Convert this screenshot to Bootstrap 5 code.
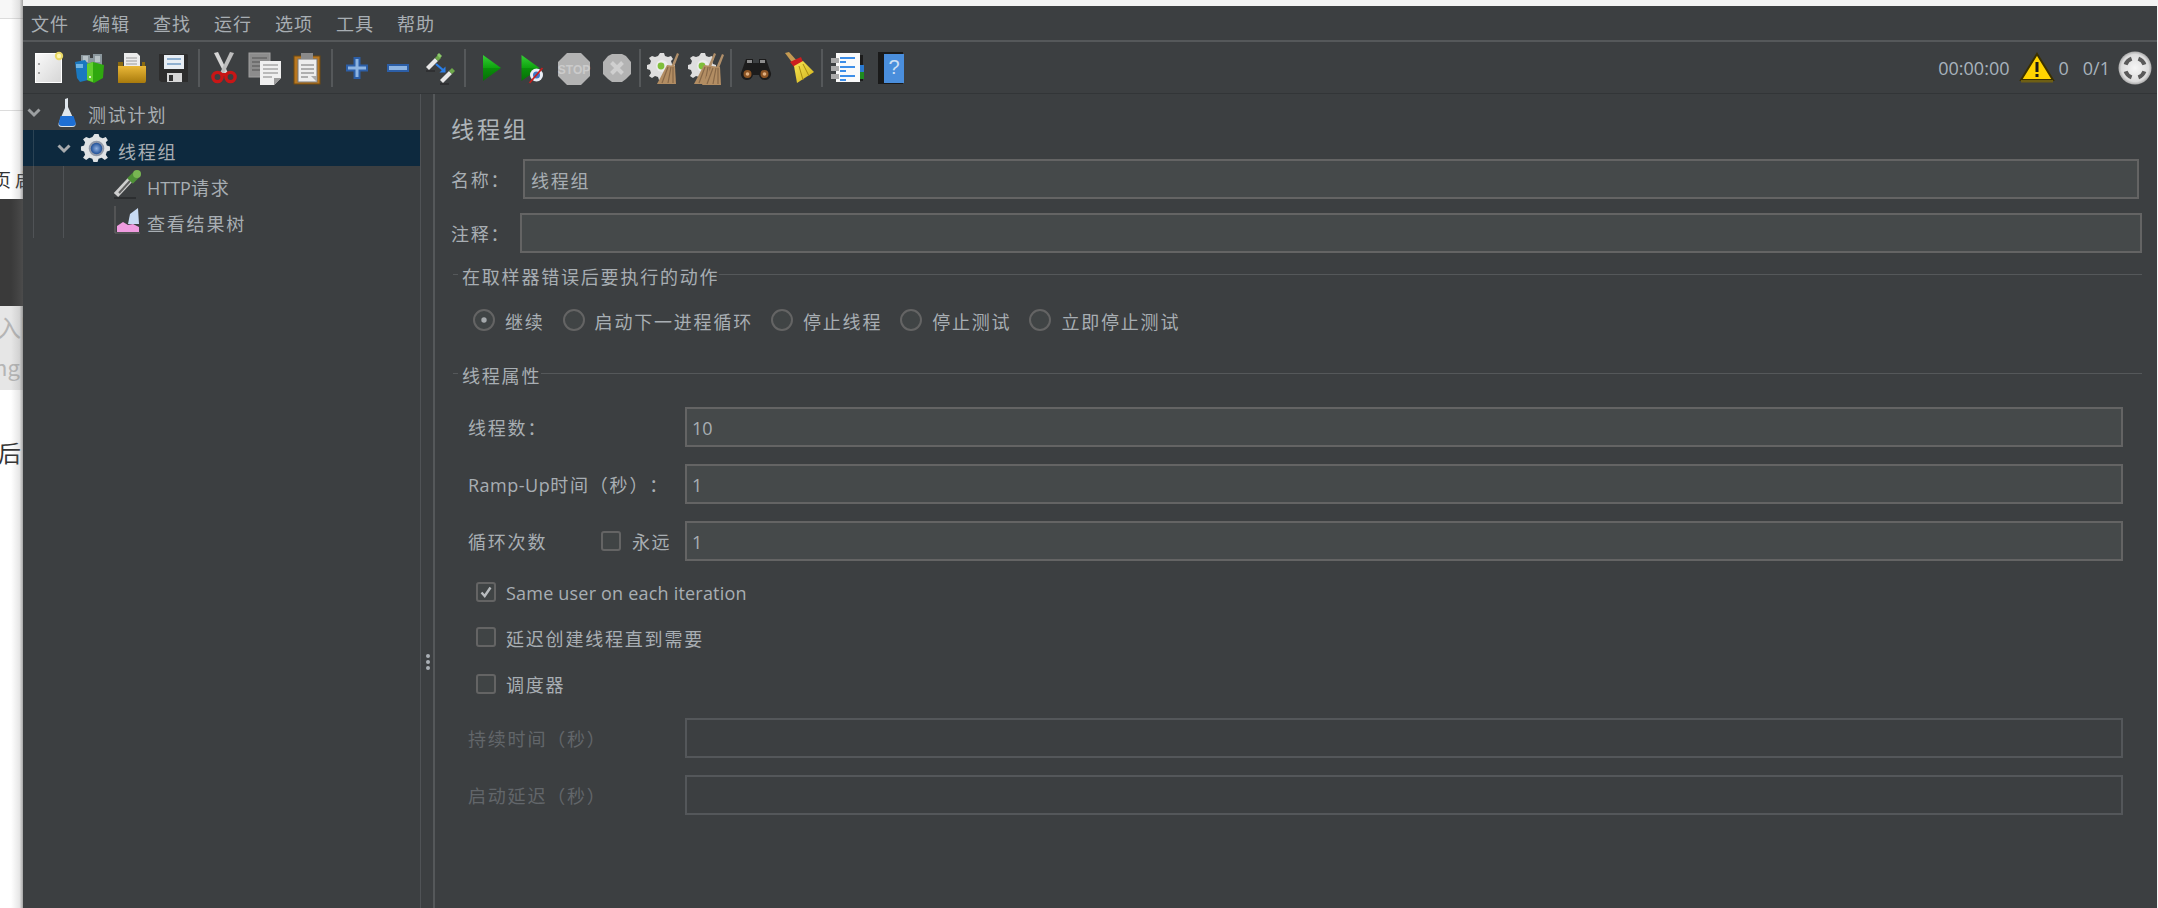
<!DOCTYPE html>
<html lang="zh">
<head>
<meta charset="utf-8">
<title>线程组</title>
<link rel="stylesheet" href="https://cdn.jsdelivr.net/npm/bootstrap@5.3.0/dist/css/bootstrap.min.css">
<style>
html,body{height:908px;overflow:hidden;margin:0}
body{background:#fff;font-family:"Open Sans","Noto Sans CJK SC",sans-serif;font-size:18px;color:#a8aeb3;line-height:24px;text-spacing-trim:space-all}
.shell{height:908px;width:2158px}
.behind{width:23px;height:908px;overflow:hidden;position:relative;flex:none;font-family:"Noto Sans CJK SC",sans-serif}
.behind::after{content:"";position:absolute;top:0;bottom:0;right:0;width:12px;background:linear-gradient(90deg,rgba(120,120,120,0),rgba(120,120,120,.18) 70%,rgba(90,90,90,.55))}
.b1{height:19px;background:#f7f7f7;border-bottom:1px solid #dcdcdc}
.b2{height:92px;border-bottom:1px solid #dcdcdc}
.b3{height:88px;color:#333;white-space:nowrap;padding-top:56px;font-size:18px;margin-left:-7px}
.b4{height:107px;background:#3a3a3a}
.b5{height:84px;background:#e6e6e6;color:#b5b5b5;white-space:nowrap}
.b5a{font-size:24px;line-height:30px;padding-top:6px;margin-left:-3px}
.b5b{font-size:22px;line-height:30px;margin-left:-12px;padding-top:9px}
.b6{color:#333;font-size:23px;padding-top:47px;margin-left:-2px;line-height:30px}
.topedge{height:6px;background:#f3f3f3}
.win{width:2134px;flex:none}
.edge{width:1px;flex:none;background:#f3f3f3}
.frame{height:902px;background:#3c3f41;overflow:hidden}
.menubar{height:36px;border-bottom:2px solid #55585a;padding-left:8px;padding-top:2px;gap:23.5px;letter-spacing:1px}
.menubar span{width:37.5px;white-space:nowrap}
.toolbar{height:52px;border-bottom:1px solid #323537;padding-left:5px}
.tool{width:41.7px;height:32px;padding:0;border:0;background:none;display:flex;justify-content:center;flex:none}
.tsep{width:8px;height:38px;flex:none;display:flex;justify-content:center}
.tsep i{width:2px;background:#55585a}
svg{display:block;overflow:visible;flex:none}
.status{font-size:18px;color:#a8b3bd;padding-right:5px;white-space:nowrap}
.warn{margin-left:11px}
.wn{margin-left:4px}
.mainrow{height:814px}
.treepane{width:397px;flex:none}
.trow{height:36px;white-space:nowrap;letter-spacing:1.8px}
.trow>span{padding-top:6px}
.g1 .trow>span{padding-top:8px}
.lat{letter-spacing:0}
.tsel{background-color:#0d293e;background-image:linear-gradient(#2b4354,#2b4354);background-size:1px 100%;background-position:10px 0;background-repeat:no-repeat;margin-left:-11px;padding-left:34px}
.g1{margin-left:10px;border-left:1px solid #505356;width:387px}
.g2{margin-left:29px;border-left:1px solid #505356}
.r0{padding-left:4px}
.chev{width:14px}
.i0{margin-left:16px;margin-right:11px}
.i1{margin-left:11px;margin-right:7px}
.i2{margin-left:48px;margin-right:5px}
.splitter{width:15px;flex:none;border-left:1px solid #505356;border-right:2px solid #55585a;padding-top:560px;gap:2px}
.splitter i{width:4px;height:4px;border-radius:50%;background:#aab0b5;margin-left:5px}
.panel{width:1723px;flex:none;padding-left:16px}
.ptitle{font-size:23px;letter-spacing:3px;line-height:30px;margin-top:20px;margin-bottom:15px;color:#aeb4b9}
.field.form-control{height:40px;border-radius:0;border:2px solid #646464;background:#45494a;color:#a8aeb3;font-size:18px;line-height:24px;padding:2px 6px 0;box-shadow:none;font-family:inherit;letter-spacing:1.8px}
.field.form-control.num{letter-spacing:0;padding-left:5px}
.field.form-control:disabled{background:transparent;border-color:#54575a;opacity:1}
.namerow{width:1688px}
.cmtrow{width:1691px;margin-top:14px}
.nl{width:72px;flex:none;letter-spacing:1.8px;white-space:nowrap;padding-top:2px}
.cl{width:69px;flex:none;letter-spacing:1.8px;white-space:nowrap;padding-top:2px}
.legendrow{height:24px;margin-left:2px;width:1689px;letter-spacing:1.8px;white-space:nowrap}
.legendrow span{padding-top:2px}
.legendrow i{height:1px;background:#55585a;margin-top:-4px}
.legendrow i.d0{width:5px;margin-right:4px;flex:none}
.lg1{margin-top:11px}
.lg2{margin-top:31px}
.radios{height:24px;margin-top:20px;margin-left:22px;letter-spacing:1.8px;white-space:nowrap}
.radios span{padding-top:3px}
.form-check-input.jr{width:22px;height:22px;margin:0 10px 0 0;background-color:#404445;border:2px solid #646464;flex:none;box-shadow:none}
.form-check-input.jr:checked{background-color:#404445;border-color:#646464;background-image:url("data:image/svg+xml,%3csvg xmlns='http://www.w3.org/2000/svg' viewBox='0 0 20 20'%3e%3ccircle cx='10' cy='10' r='3' fill='%23a5a9ac'/%3e%3c/svg%3e");background-size:100%}
.rl{margin-right:18px}
.props{margin-left:17px;width:1655px}
.prow{height:40px;margin-top:17px}
.p0{margin-top:20px}
.plabel{width:217px;flex:none;letter-spacing:1.8px;white-space:nowrap;padding-top:2px}
.plabel.off{color:#62666a}
.rampl{letter-spacing:.5px}
.form-check-input.jc{width:20px;height:20px;margin:0;background-color:#404445;border:2px solid #646464;border-radius:3px;flex:none;box-shadow:none}
.form-check-input.jc:checked{background-color:#404445;border-color:#646464;background-image:url("data:image/svg+xml,%3csvg xmlns='http://www.w3.org/2000/svg' viewBox='0 0 16 16'%3e%3cpath d='M3.5 8.5 6.7 12 12.5 3.5' fill='none' stroke='%23b8bcbf' stroke-width='2.4'/%3e%3c/svg%3e");background-size:100%}
.loop{width:133px;flex:none;letter-spacing:1.8px;white-space:nowrap;padding-top:2px}
.forever{width:84px;flex:none;letter-spacing:1.5px}
.forever span{padding-top:2px}
.forever .jc{margin-right:11px}
.crow{height:24px;margin-left:8px;white-space:nowrap;letter-spacing:1.8px}
.crow span{padding-top:2px}
.crow .sameu{letter-spacing:.2px}
.crow .late{padding-top:4px}
.crow .jc{margin-right:10px}
.c0{margin-top:19px}
.c1{margin-top:21px}
.c2{margin-top:23px}
.p3{margin-top:22px}
.defs{width:0;height:0;position:absolute}
</style>
</head>
<body>
<svg class="defs" aria-hidden="true"><defs>
<linearGradient id="gPage" x1="0" y1="0" x2="1" y2="1"><stop offset="0" stop-color="#fafafa"/><stop offset="1" stop-color="#d6d6d6"/></linearGradient>
<linearGradient id="gGold" x1="0" y1="0" x2="0" y2="1"><stop offset="0" stop-color="#eab838"/><stop offset="1" stop-color="#a87a0c"/></linearGradient>
<linearGradient id="gGreen" x1="0" y1="0" x2="0" y2="1"><stop offset="0" stop-color="#35cf35"/><stop offset=".5" stop-color="#0ea30e"/><stop offset=".51" stop-color="#0a8f0a"/><stop offset="1" stop-color="#076f07"/></linearGradient>
<linearGradient id="gBroom" x1="0" y1="0" x2="1" y2="1"><stop offset="0" stop-color="#f7e653"/><stop offset="1" stop-color="#d0b01a"/></linearGradient>
<radialGradient id="gBall" cx=".5" cy=".5" r=".55"><stop offset="0" stop-color="#f6f6f6"/><stop offset=".75" stop-color="#dcdcdc"/><stop offset="1" stop-color="#8f8f8f"/></radialGradient>
<radialGradient id="gCore" cx=".5" cy=".5" r=".5"><stop offset="0" stop-color="#8fb0e0"/><stop offset="1" stop-color="#1f4f96"/></radialGradient>
<g id="gearBrush">
<path d="M12 1h4l1 3 3 1 3-1 2 3-2 2 1 3 3 1v4l-3 1-1 3 2 3-3 2-3-2-3 1-1 3h-4l-1-3-3-1-3 2-3-2 2-3-1-3-3-1v-4l3-1 1-3-2-3 3-2 3 1 3-1z" fill="#dedede"/>
<circle cx="14" cy="14" r="6" fill="#ececec"/><circle cx="13" cy="14" r="3.4" fill="#7fbf3a"/>
</g>
<g id="brush">
<path d="M29 1l2 1-5 13h-3z" fill="#b08f6a"/>
<path d="M19 13l8 1 1 18H9z" fill="#b28d63"/>
<path d="M20 15l-6 16M23 15l-3 16M25 15l0 16" stroke="#876848" stroke-width="1.2"/>
</g>
</defs></svg>

<div class="shell d-flex">
  <div class="behind">
    <div class="b1"></div><div class="b2"></div>
    <div class="b3">页&nbsp;启</div>
    <div class="b4"></div>
    <div class="b5"><div class="b5a">入图</div><div class="b5b">ing</div></div>
    <div class="b6">后</div>
  </div>
  <div class="win">
    <div class="topedge"></div>
    <div class="frame d-flex flex-column">
      <div class="menubar d-flex align-items-center">
        <span>文件</span><span>编辑</span><span>查找</span><span>运行</span><span>选项</span><span>工具</span><span>帮助</span>
      </div>
      <div class="toolbar d-flex align-items-center">
        <button class="tool" type="button" aria-label="新建"><svg width="32" height="32" viewBox="0 0 32 32"><rect x="2.5" y="1.5" width="26" height="29" fill="url(#gPage)" stroke="#fff"/><circle cx="26" cy="4" r="4.2" fill="#e9d866"/><circle cx="26" cy="4" r="2.2" fill="#fff6b0"/><circle cx="6" cy="12" r="1" fill="#888"/><circle cx="6" cy="21" r="1" fill="#888"/></svg></button>
        <button class="tool" type="button" aria-label="模板"><svg width="32" height="32" viewBox="0 0 32 32"><path d="M6 3h9v3h3V2h9v12H6z" fill="#8b979d"/><path d="M8 4h5v6H8zM20 4h5v6h-5z" fill="#b8c2c6"/><path d="M0 10l10-2 3 4v16l-8 2-3-4z" fill="#1a78bf"/><path d="M1 12h7v4H1z" fill="#6fb4e3"/><path d="M12 12l6-2 11 3-1 13-9 5-7-3z" fill="#2fa80f"/><path d="M12 12l6-2v20l-6-2z" fill="#63cf2f"/><circle cx="15" cy="25" r="1" fill="#fff"/></svg></button>
        <button class="tool" type="button" aria-label="打开"><svg width="32" height="32" viewBox="0 0 32 32"><path d="M8 1h13l3 3v14H8z" fill="#ececec"/><path d="M10 6h11M10 9h11M10 12h11" stroke="#9a9a9a"/><path d="M2 10h5v5h19v-5h3v21H2z" fill="#8a6a10"/><path d="M2 14h28v15a2 2 0 0 1-2 2H3a1 1 0 0 1-1-1z" fill="url(#gGold)"/></svg></button>
        <button class="tool" type="button" aria-label="保存"><svg width="32" height="32" viewBox="0 0 32 32"><path d="M1 2h28l1 1v27H3l-2-2z" fill="#2d2d2d"/><rect x="6" y="3" width="20" height="14" fill="#e8eef4"/><path d="M9 6h14v2H9zM9 11h14v2H9z" fill="#8fb0d0"/><rect x="9" y="21" width="15" height="9" fill="#d8d8d8"/><rect x="11" y="23" width="4" height="6" fill="#333"/></svg></button>
        <div class="tsep"><i></i></div>
        <button class="tool" type="button" aria-label="剪切"><svg width="32" height="32" viewBox="0 0 32 32"><path d="M6 1l4-1 10 21-3 2z" fill="#d5d5d5"/><path d="M26 1l-4-1-10 21 3 2z" fill="#bdbdbd"/><circle cx="9.5" cy="25" r="4.6" fill="none" stroke="#c81616" stroke-width="3.4"/><circle cx="22.5" cy="25" r="4.6" fill="none" stroke="#c81616" stroke-width="3.4"/><path d="M13 21h6v3h-6z" fill="#c81616"/></svg></button>
        <button class="tool" type="button" aria-label="复制"><svg width="32" height="32" viewBox="0 0 32 32"><rect x="0" y="1" width="21" height="24" fill="#8c8c8c" stroke="#a0a0a0"/><path d="M3 6h15M3 10h8M3 14h8M3 18h8" stroke="#666" stroke-width="1.5"/><path d="M11 9h21v17l-7 7H11z" fill="#efefef"/><path d="M14 13h15M14 17h15M14 21h15M14 25h9" stroke="#a8a8a8" stroke-width="1.5"/><path d="M25 33v-7h7z" fill="#9b9b9b"/></svg></button>
        <button class="tool" type="button" aria-label="粘贴"><svg width="32" height="32" viewBox="0 0 32 32"><rect x="3" y="4" width="26" height="28" fill="#b9771f" stroke="#6e4a12"/><rect x="7" y="7" width="19" height="23" fill="#ededed" stroke="#777"/><path d="M10 13h13M10 17h13M10 21h13M10 25h7" stroke="#9a9a9a" stroke-width="1.4"/><rect x="10" y="1" width="12" height="6" fill="#8a8a8a"/><path d="M26 30v-6h-6z" fill="#aaa"/></svg></button>
        <div class="tsep"><i></i></div>
        <button class="tool" type="button" aria-label="展开"><svg width="32" height="32" viewBox="0 0 32 32"><path d="M13.5 6h5v7.500h7.500v5h-7.500V26h-5v-7.500H6v-5h7.500z" fill="#8db4e2" stroke="#2c5ea6" stroke-width="2"/></svg></button>
        <button class="tool" type="button" aria-label="折叠"><svg width="32" height="32" viewBox="0 0 32 32"><rect x="6" y="13" width="20" height="6" fill="#8db4e2" stroke="#2c5ea6" stroke-width="2"/></svg></button>
        <button class="tool" type="button" aria-label="切换"><svg width="32" height="32" viewBox="0 0 32 32"><path d="M2 15L11 6l3 3-9 9z" fill="#e8e8e8"/><path d="M11 6l3-3 3 3-3 3z" fill="#6da84a"/><path d="M15 1l3 3-2 2-3-3z" fill="#8cc96a"/><path d="M16 28l9-9 3 3-9 9z" fill="#e8e8e8"/><path d="M25 19l3-3 3 3-3 3z" fill="#6da84a"/><path d="M12 12l7 6" stroke="#2a7ee8" stroke-width="2.200"/><path d="M15.500 20.500h6v-6z" fill="#2a7ee8"/><path d="M2 19h9M16 32h9" stroke="#2b2d2e" stroke-width="1.500"/></svg></button>
        <div class="tsep"><i></i></div>
        <button class="tool" type="button" aria-label="启动"><svg width="32" height="32" viewBox="0 0 32 32"><path d="M9 3l18 13L9 29z" fill="url(#gGreen)"/></svg></button>
        <button class="tool" type="button" aria-label="不停顿启动"><svg width="32" height="32" viewBox="0 0 32 32"><path d="M6.500 3l18 13-18 13z" fill="url(#gGreen)"/><circle cx="21.500" cy="23" r="6.500" fill="#e9eef6"/><circle cx="21.500" cy="23" r="3.500" fill="#3c78c8"/><path d="M14.500 31l13-15" stroke="#c41e1e" stroke-width="1.800"/></svg></button>
        <button class="tool" type="button" aria-label="停止"><svg width="34" height="34" viewBox="0 0 34 34"><g transform="translate(1 0)"><path d="M10 1h14l9 9v14l-9 9H10l-9-9V10z" fill="#b3b3b3"/><text x="17" y="21.500" text-anchor="middle" font-family="Liberation Sans" font-size="12" font-weight="700" fill="#cbcbcb">STOP</text></g></svg></button>
        <button class="tool" type="button" aria-label="关闭"><svg width="32" height="32" viewBox="0 0 32 32"><g transform="translate(2 0)"><path d="M11 2h10l4 2 5 6v12l-5 5-4 3H11l-4-3-5-5V10l5-6z" fill="#b3b3b3"/><path d="M10.500 10.500l11 11M21.500 10.500l-11 11" stroke="#cfcfcf" stroke-width="4"/></g></svg></button>
        <div class="tsep"><i></i></div>
        <button class="tool" type="button" aria-label="清除"><svg width="32" height="32" viewBox="0 0 32 32"><use href="#gearBrush"/><use href="#brush"/></svg></button>
        <button class="tool" type="button" aria-label="清除全部"><svg width="34" height="32" viewBox="0 0 34 32"><use href="#gearBrush"/><use href="#brush" transform="translate(-4 0)"/><use href="#brush" transform="translate(4 1)"/></svg></button>
        <div class="tsep"><i></i></div>
        <button class="tool" type="button" aria-label="搜索"><svg width="32" height="32" viewBox="0 0 32 32"><path d="M6 7h7v4h6V7h7l5 14a6 6 0 0 1-12 2h-6a6 6 0 0 1-12-2z" fill="#1c1c1c"/><path d="M7 8h5v3H7zM20 8h5v3h-5z" fill="#8d8d8d"/><circle cx="7.500" cy="22" r="4" fill="#8c5424"/><circle cx="24.500" cy="22" r="4" fill="#8c5424"/><circle cx="7.500" cy="22" r="1.800" fill="#e0b080"/><circle cx="24.500" cy="22" r="1.800" fill="#e0b080"/></svg></button>
        <button class="tool" type="button" aria-label="重置"><svg width="32" height="32" viewBox="0 0 32 32"><path d="M3 1l4-1 9 10-4 3z" fill="#c49a52"/><path d="M8 10l11-5 2 5-9 5z" fill="#cc1f1f"/><path d="M12 14l9-5 11 11-17 11z" fill="url(#gBroom)"/><path d="M17 14l4 14M21 12l6 12" stroke="#a98c10"/></svg></button>
        <div class="tsep"><i></i></div>
        <button class="tool" type="button" aria-label="函数助手"><svg width="33" height="32" viewBox="0 0 33 32"><rect x="26" y="3" width="6" height="26" fill="#1c1c1c"/><rect x="28" y="13" width="5" height="7" fill="#2a79d0"/><rect x="28" y="20" width="5" height="7" fill="#1f8a1f"/><rect x="5" y="1" width="24" height="29" fill="#fafafa"/><path d="M9 6h15M9 15h15M9 24h15" stroke="#3d8ee8" stroke-width="2"/><path d="M9 10h6M9 19h6M9 28h6" stroke="#3d8ee8" stroke-width="2"/><path d="M0 6h8v5H0zM0 14h8v5H0zM0 22h8v5H0z" fill="#aaa"/></svg></button>
        <button class="tool" type="button" aria-label="帮助"><svg width="28" height="32" viewBox="0 0 28 32"><g transform="translate(2 0)"><rect x="1" y="0" width="25" height="32" fill="#1a1a1a"/><rect x="7" y="2" width="20" height="29" fill="#4a8edc"/><text x="17" y="22" text-anchor="middle" font-family="Liberation Sans" font-size="20" fill="#cfe0f4">?</text></g></svg></button>
        <div class="status ms-auto d-flex align-items-center">
          <span>00:00:00</span>
          <svg class="warn" width="34" height="30" viewBox="0 0 34 30"><path d="M17 1L33 27H1z" fill="#ffd400" stroke="#3a3000" stroke-width="2"/><rect x="1" y="27" width="32" height="2.500" fill="#6e5f14"/><path d="M15.500 9h3v10h-3zM15.500 21h3v3h-3z" fill="#1a1a1a"/></svg>
          <span class="wn">0</span><span>&nbsp;&nbsp;&nbsp;0/1</span>
          <svg class="ms-2" width="34" height="34" viewBox="0 0 34 34"><circle cx="17" cy="17" r="16.500" fill="url(#gBall)"/><circle cx="17" cy="17" r="10" fill="none" stroke="#5a5a5a" stroke-width="4" pathLength="360" stroke-dasharray="50 40" stroke-dashoffset="-20"/></svg>
        </div>
      </div>
      <div class="mainrow d-flex">
        <div class="treepane">
          <div class="trow r0 d-flex align-items-center">
            <svg class="chev" width="14" height="9" viewBox="0 0 14 9"><path d="M1.500 1.500L7 7l5.500-5.500" fill="none" stroke="#9c9fa1" stroke-width="3"/></svg>
            <svg class="i0" width="20" height="29" viewBox="0 0 20 29"><path d="M8 1l3-1v9l7 15q2 5-3 5H5q-5 0-3-5l6-14z" fill="#dfe6ec"/><path d="M3.500 18h13l2 6q1 4-3 4H5q-4 0-3-4z" fill="#1e6fd4"/></svg>
            <span>测试计划</span>
          </div>
          <div class="g1">
            <div class="trow tsel d-flex align-items-center">
              <svg class="chev" width="14" height="9" viewBox="0 0 14 9"><path d="M1.500 1.500L7 7l5.500-5.500" fill="none" stroke="#a8abae" stroke-width="3"/></svg>
              <svg class="i1" width="29" height="29" viewBox="0 0 28 28"><path d="M12 0h4l1 3 3 1 3-1 2 3-2 2 1 3 3 1v4l-3 1-1 3 2 3-3 2-3-2-3 1-1 3h-4l-1-3-3-1-3 2-3-2 2-3-1-3-3-1v-4l3-1 1-3-2-3 3-2 3 1 3-1z" fill="#dfe2e4"/><circle cx="14" cy="14" r="7.500" fill="#8f98a8"/><circle cx="14" cy="14" r="5.500" fill="url(#gCore)"/></svg>
              <span>线程组</span>
            </div>
            <div class="g2">
              <div class="trow d-flex align-items-center">
                <svg class="i2" width="30" height="30" viewBox="0 0 30 30"><path d="M4 26L18 11" stroke="#cfcfcf" stroke-width="6"/><path d="M7 24L18 12" stroke="#5f5f5f" stroke-width="2"/><path d="M18 12l6-6" stroke="#4e8f36" stroke-width="8"/><circle cx="25" cy="5" r="4" fill="#78b552"/><path d="M2 29h22" stroke="#2c2e30" stroke-width="2"/></svg>
                <span><span class="lat">HTTP</span>请求</span>
              </div>
              <div class="trow d-flex align-items-center">
                <svg class="i2" width="30" height="30" viewBox="0 0 30 30"><path d="M3 1v27h25" fill="none" stroke="#6a6a6a"/><path d="M5 27v-6l6-4 5 3 5-1 6 3v5z" fill="#ef9ce0"/><path d="M16 19l2-10 8-6 1 16z" fill="#c8dbf4"/></svg>
                <span>查看结果树</span>
              </div>
            </div>
          </div>
        </div>
        <div class="splitter d-flex flex-column"><i></i><i></i><i></i></div>
        <div class="panel">
          <div class="ptitle">线程组</div>
          <div class="namerow d-flex align-items-center"><span class="nl">名称：</span><input class="field form-control" value="线程组" aria-label="名称"></div>
          <div class="cmtrow d-flex align-items-center"><span class="cl">注释：</span><input class="field form-control" aria-label="注释"></div>
          <div class="legendrow lg1 d-flex align-items-center"><i class="d0"></i><span>在取样器错误后要执行的动作</span><i class="flex-fill"></i></div>
          <div class="radios d-flex align-items-center">
            <input class="form-check-input jr" type="radio" name="act" checked aria-label="继续"><span class="rl">继续</span>
            <input class="form-check-input jr" type="radio" name="act" aria-label="启动下一进程循环"><span class="rl">启动下一进程循环</span>
            <input class="form-check-input jr" type="radio" name="act" aria-label="停止线程"><span class="rl">停止线程</span>
            <input class="form-check-input jr" type="radio" name="act" aria-label="停止测试"><span class="rl">停止测试</span>
            <input class="form-check-input jr" type="radio" name="act" aria-label="立即停止测试"><span class="rl">立即停止测试</span>
          </div>
          <div class="legendrow lg2 d-flex align-items-center"><i class="d0"></i><span>线程属性</span><i class="flex-fill"></i></div>
          <div class="props">
            <div class="prow p0 d-flex align-items-center"><span class="plabel">线程数：</span><input class="field form-control num" value="10" aria-label="线程数"></div>
            <div class="prow d-flex align-items-center"><span class="plabel"><span class="rampl">Ramp-Up</span>时间（秒）：</span><input class="field form-control num" value="1" aria-label="Ramp-Up"></div>
            <div class="prow d-flex align-items-center"><span class="loop">循环次数</span><label class="forever d-flex align-items-center"><input class="form-check-input jc" type="checkbox"><span>永远</span></label><input class="field form-control num" value="1" aria-label="循环次数"></div>
            <label class="crow c0 d-flex align-items-center"><input class="form-check-input jc" type="checkbox" checked><span class="sameu">Same user on each iteration</span></label>
            <label class="crow c1 d-flex align-items-center"><input class="form-check-input jc" type="checkbox"><span class="late">延迟创建线程直到需要</span></label>
            <label class="crow c2 d-flex align-items-center"><input class="form-check-input jc" type="checkbox"><span>调度器</span></label>
            <div class="prow p3 d-flex align-items-center"><span class="plabel off">持续时间（秒）</span><input class="field form-control" disabled aria-label="持续时间"></div>
            <div class="prow d-flex align-items-center"><span class="plabel off">启动延迟（秒）</span><input class="field form-control" disabled aria-label="启动延迟"></div>
          </div>
        </div>
      </div>
    </div>
  </div>
  <div class="edge"></div>
</div>
<script src="https://cdn.jsdelivr.net/npm/bootstrap@5.3.0/dist/js/bootstrap.bundle.min.js"></script>
</body>
</html>
